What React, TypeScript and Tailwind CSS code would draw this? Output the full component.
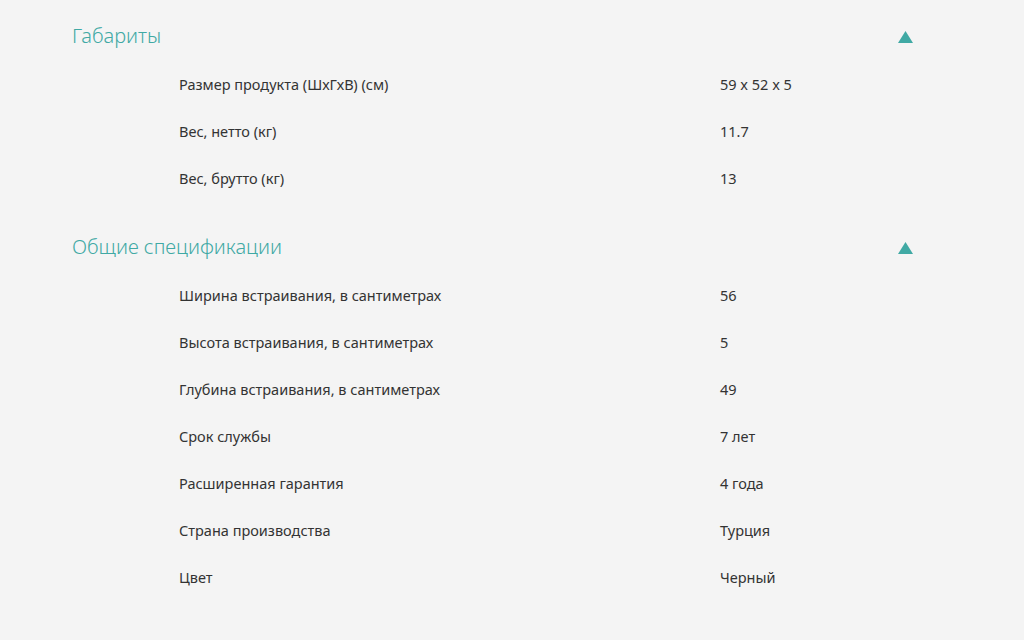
import React from 'react';

type Row = { label: string; value: string };
type Section = { title: string; rows: Row[] };

const SECTIONS: Section[] = [
  {
    title: 'Габариты',
    rows: [
      { label: 'Размер продукта (ШхГхВ) (см)', value: '59 x 52 x 5' },
      { label: 'Вес, нетто (кг)', value: '11.7' },
      { label: 'Вес, брутто (кг)', value: '13' },
    ],
  },
  {
    title: 'Общие спецификации',
    rows: [
      { label: 'Ширина встраивания, в сантиметрах', value: '56' },
      { label: 'Высота встраивания, в сантиметрах', value: '5' },
      { label: 'Глубина встраивания, в сантиметрах', value: '49' },
      { label: 'Срок службы', value: '7 лет' },
      { label: 'Расширенная гарантия', value: '4 года' },
      { label: 'Страна производства', value: 'Турция' },
      { label: 'Цвет', value: 'Черный' },
    ],
  },
];

const SpecSection: React.FC<{ section: Section }> = ({ section }) => (
  <div className="pt-[22px] pb-[9px]">
    {/* Header */}
    <div className="flex items-center justify-between h-[28px]">
      <h2 className="text-[20px] leading-[28px] font-light text-[#40a9a4]">{section.title}</h2>
      <svg width="15" height="12" viewBox="0 0 15 12" className="mr-[111px] mt-[2px]">
        <polygon points="7.5,0 15,12 0,12" fill="#40a9a4" />
      </svg>
    </div>

    {/* Rows */}
    <div className="mt-[11px]">
      {section.rows.map((row) => (
        <div key={row.label} className="flex items-center h-[47px] text-[14.5px] text-[#333333]">
          <div className="w-[648px] pl-[107px]">{row.label}</div>
          <div>{row.value}</div>
        </div>
      ))}
    </div>
  </div>
);

export default function App() {
  return (
    <div
      className="min-h-[640px] w-full bg-[#f4f4f4] pl-[72px]"
      style={{ fontFamily: '"Noto Sans", "Open Sans", sans-serif' }}
    >
      {SECTIONS.map((s) => (
        <SpecSection key={s.title} section={s} />
      ))}
    </div>
  );
}
